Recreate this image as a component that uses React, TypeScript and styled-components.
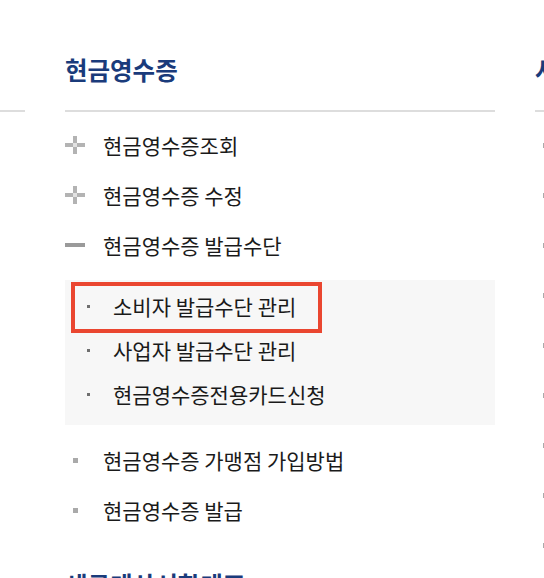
import React from "react";
import styled, { createGlobalStyle } from "styled-components";

const GlobalStyle = createGlobalStyle`
  html, body {
    margin: 0;
    padding: 0;
    background: #ffffff;
    overflow: hidden;
  }
  body {
    font-family: "Noto Sans CJK KR", "Noto Sans", sans-serif;
    color: #1a1a1a;
  }
`;

const Board = styled.div`
  display: flex;
  gap: 40px;
  margin-left: -405px;
  padding-top: 20px;
  width: max-content;
`;

const Column = styled.div`
  width: 430px;
  flex: none;
`;

const Title = styled.h3`
  margin: 0;
  padding: 33px 0 23px;
  font-size: 24.5px;
  line-height: 34px;
  font-weight: 700;
  color: #1a3b7b;
  border-bottom: 2px solid #dddddd;
  white-space: nowrap;
`;

const List = styled.ul`
  list-style: none;
  margin: 0;
  padding: 8px 0 0;
`;

const Row = styled.div`
  display: flex;
  align-items: center;
  height: 50px;
  font-size: 21px;
  color: #1a1a1a;
  white-space: nowrap;
`;

const Marker = styled.span`
  width: 38px;
  flex: none;
  display: flex;
  align-items: center;
`;

const Square = styled.span`
  width: 5px;
  height: 5px;
  margin-left: 8px;
  background: #aaaaaa;
`;

const Minus = styled.span`
  width: 20px;
  height: 4px;
  background: #9a9a9a;
`;

const SubList = styled.ul`
  list-style: none;
  margin: 10px 0 10px;
  padding: 4px 0 9px;
  background: #f7f7f7;
`;

const SubItem = styled.li`
  position: relative;
  display: flex;
  align-items: center;
  height: 44px;
  padding-left: 22px;
  font-size: 21px;
  color: #1a1a1a;
  white-space: nowrap;
`;

const Dot = styled.span`
  width: 3px;
  height: 3px;
  margin-right: 23px;
  background: #6f6f6f;
  flex: none;
`;

const Highlight = styled.span`
  position: absolute;
  left: 6px;
  top: -2px;
  width: 251px;
  height: 51px;
  box-sizing: border-box;
  border: 4px solid #ea4630;
  pointer-events: none;
`;

const PlusIcon = () => (
  <svg width="20" height="18" viewBox="0 0 20 18" aria-hidden="true">
    <rect x="0" y="7" width="20" height="4" fill="#b3b3b3" />
    <rect x="8" y="0" width="4" height="18" fill="#b3b3b3" />
    <rect x="8" y="7" width="4" height="4" fill="#e2e2e2" />
  </svg>
);

type Item = {
  label: string;
  kind: "plus" | "minus" | "square";
  children?: { label: string; marked?: boolean }[];
};

type SectionData = { title: string; items: Item[] };

const columns: SectionData[][] = [
  [
    {
      title: "전자(세금)계산서",
      items: [
        { label: "발급", kind: "square" },
        { label: "조회", kind: "square" },
        { label: "수정발급", kind: "square" },
        { label: "거래처 관리", kind: "square" },
        { label: "품목 관리", kind: "square" },
        { label: "발급보류/예정 목록", kind: "square" },
        { label: "합계표", kind: "square" },
        { label: "보안카드", kind: "square" },
        { label: "환경설정", kind: "square" },
      ],
    },
  ],
  [
    {
      title: "현금영수증",
      items: [
        { label: "현금영수증조회", kind: "plus" },
        { label: "현금영수증 수정", kind: "plus" },
        {
          label: "현금영수증 발급수단",
          kind: "minus",
          children: [
            { label: "소비자 발급수단 관리", marked: true },
            { label: "사업자 발급수단 관리" },
            { label: "현금영수증전용카드신청" },
          ],
        },
        { label: "현금영수증 가맹점 가입방법", kind: "square" },
        { label: "현금영수증 발급", kind: "square" },
      ],
    },
    {
      title: "세금계산서합계표",
      items: [
        { label: "합계표 조회", kind: "square" },
        { label: "합계표 제출", kind: "square" },
      ],
    },
  ],
  [
    {
      title: "사업자등록",
      items: [
        { label: "사업자등록 신청", kind: "square" },
        { label: "사업자등록 정정", kind: "square" },
        { label: "휴업 신고", kind: "square" },
        { label: "폐업 신고", kind: "square" },
        { label: "재개업 신고", kind: "square" },
        { label: "사업자등록증 재발급", kind: "square" },
        { label: "사업자등록 신청 조회", kind: "square" },
        { label: "사업자등록 상태조회", kind: "square" },
        { label: "사업자등록 결과조회", kind: "square" },
      ],
    },
  ],
];

const renderMarker = (kind: Item["kind"]) => {
  if (kind === "plus") return <PlusIcon />;
  if (kind === "minus") return <Minus />;
  return <Square />;
};

export default function App() {
  return (
    <>
      <GlobalStyle />
      <Board>
        {columns.map((sections, ci) => (
          <Column key={ci}>
            {sections.map((section) => (
              <section key={section.title}>
                <Title>{section.title}</Title>
                <List>
                  {section.items.map((item) => (
                    <li key={item.label}>
                      <Row>
                        <Marker>{renderMarker(item.kind)}</Marker>
                        {item.label}
                      </Row>
                      {item.children && (
                        <SubList>
                          {item.children.map((child) => (
                            <SubItem key={child.label}>
                              <Dot />
                              {child.label}
                              {child.marked && <Highlight />}
                            </SubItem>
                          ))}
                        </SubList>
                      )}
                    </li>
                  ))}
                </List>
              </section>
            ))}
          </Column>
        ))}
      </Board>
    </>
  );
}
